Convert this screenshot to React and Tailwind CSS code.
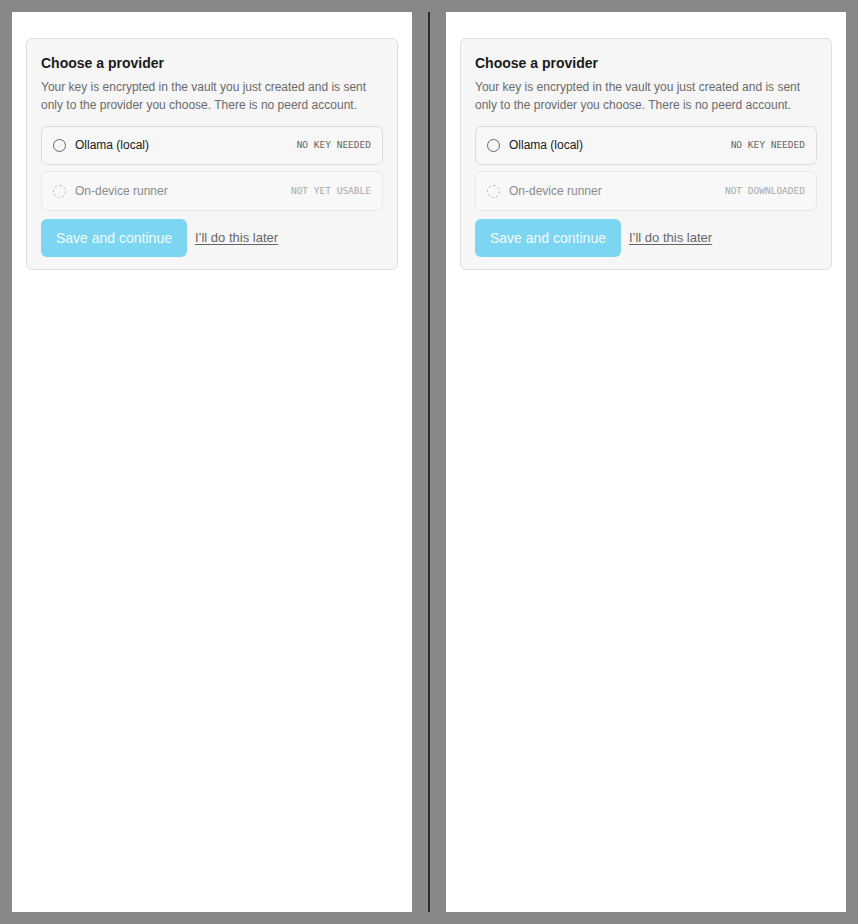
const sans = { fontFamily: '"Liberation Sans", Arial, sans-serif' };

function Option({ label, badge, disabled }) {
  return (
    <div
      className={
        "flex h-[39px] items-center justify-between rounded-md border pl-[11px] pr-[11px] " +
        (disabled ? "h-[40px] border-[#e8e8e8] bg-[#f8f8f8]" : "border-[#dcdcdc] bg-[#f7f7f7]")
      }
    >
      <div className="flex items-center gap-[9px]">
        <span
          className={
            "block h-[13px] w-[13px] rounded-full border " +
            (disabled ? "border-dashed border-[#bdbdbd]" : "border-[#666]")
          }
        />
        <span className={"text-[12px] leading-[15px] " + (disabled ? "text-[#8a8a8a]" : "text-[#1a1a1a]")}>
          {label}
        </span>
      </div>
      <span
        className={"text-[9.5px] uppercase " + (disabled ? "text-[#a8a8a8]" : "text-[#666]")}
        style={{ fontFamily: '"DejaVu Sans Mono", monospace' }}
      >
        {badge}
      </span>
    </div>
  );
}

function Panel({ runnerBadge }) {
  return (
    <div className="h-[900px] w-[400px] bg-white px-[14px] pt-[26px]">
      <div className="rounded-md border border-[#e0e0e0] bg-[#f6f6f6] px-[14px] pb-[12px] pt-[14px]">
        <h2 className="text-[14px] font-bold leading-[20px] text-[#1a1a1a]">Choose a provider</h2>
        <p className="mt-[5px] text-[12px] leading-[18px] text-[#6b6b6b]">
          Your key is encrypted in the vault you just created and is sent only to the provider you choose. There
          is no peerd account.
        </p>
        <div className="mt-[12px] flex flex-col gap-[6px]">
          <Option label="Ollama (local)" badge="No key needed" />
          <Option label="On-device runner" badge={runnerBadge} disabled />
        </div>
        <div className="mt-[8px] flex items-center gap-[8px]">
          <button className="h-[38px] rounded-md bg-[#7cd5f1] px-[15px] text-[14px] text-white/95">
            Save and continue
          </button>
          <a className="text-[13px] text-[#666] underline underline-offset-2">I’ll do this later</a>
        </div>
      </div>
    </div>
  );
}

export default function App() {
  return (
    <div className="flex h-[924px] w-[858px] bg-[#888888] p-[12px]" style={sans}>
      <Panel runnerBadge="Not yet usable" />
      <div className="mx-[16px] w-[2px] bg-[#2b2b2b]" />
      <Panel runnerBadge="Not downloaded" />
    </div>
  );
}
